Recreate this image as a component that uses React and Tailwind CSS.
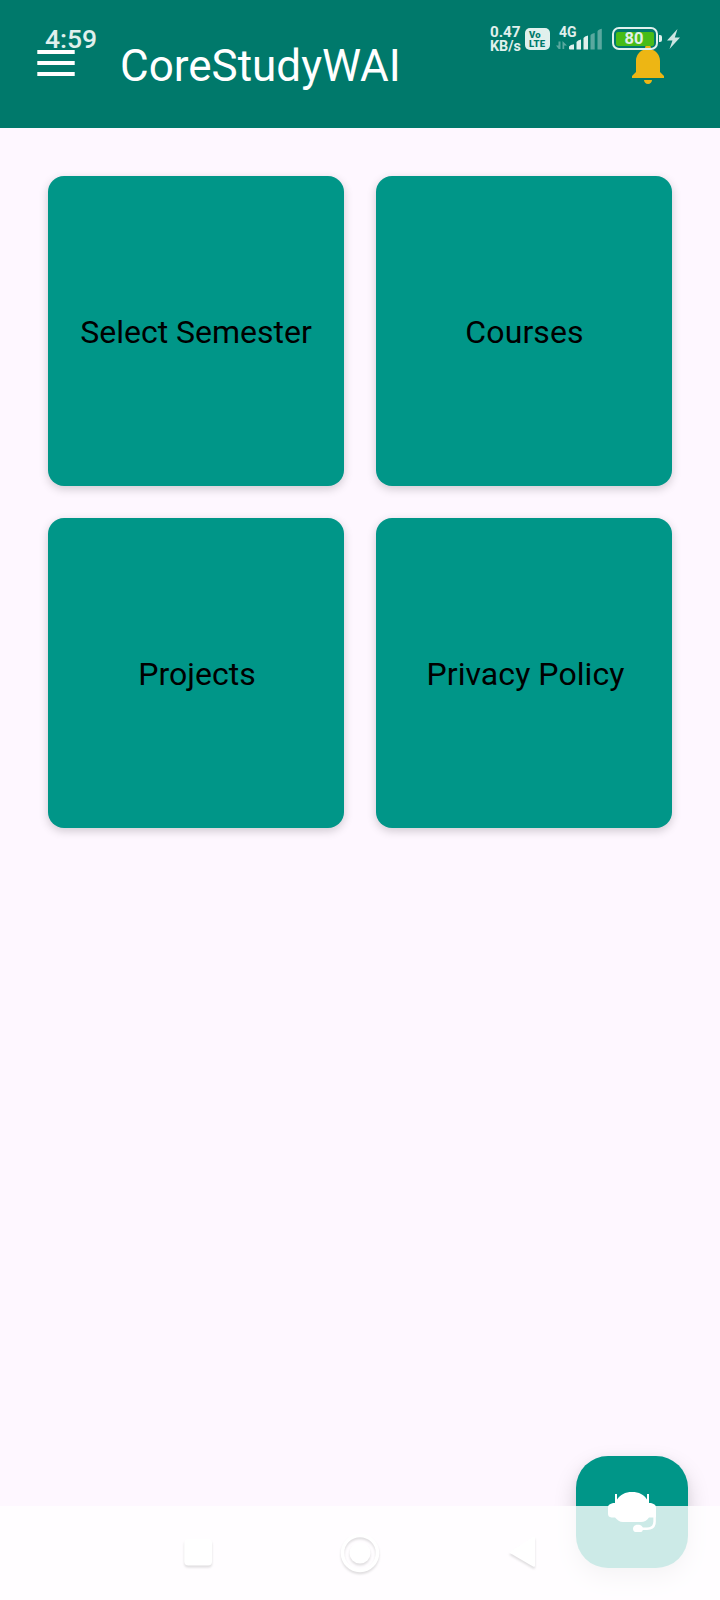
import React from "react";

const tiles = [
  { label: "Select Semester", offset: "pt-[2px]" },
  { label: "Courses", offset: "pt-[2px] pl-[1px] tracking-[0.1px]" },
  { label: "Projects", offset: "pt-[1px] pl-[2px]" },
  { label: "Privacy Policy", offset: "pt-[1px] pl-[3px] tracking-[0.07px]" },
];

function MenuIcon() {
  return (
    <svg className="h-[26px] w-[38px]" viewBox="0 0 38 26" fill="#fff">
      <rect x="0.300" y="0" width="37.400" height="4" />
      <rect x="0.300" y="11" width="37.400" height="4" />
      <rect x="0.300" y="22" width="37.400" height="4" />
    </svg>
  );
}

function BellIcon() {
  return (
    <svg className="h-[39px] w-8" viewBox="0 0 32 39" fill="#edb614">
      <path d="M0 33V31L4 27V16C4 10.300 7.800 5.600 13 4.300V3C13 1.200 14.300 0 16 0s3 1.200 3 3v1.300C24.200 5.600 28 10.300 28 16V27l4 4v2Z" />
      <path d="M12 35h8c0 2.300-1.700 4-4 4s-4-1.700-4-4Z" />
    </svg>
  );
}

function SignalIcon() {
  return (
    <svg className="absolute inset-0 h-full w-full" viewBox="0 0 47 24" fill="#e0f0ed">
      <g opacity="0.4">
        <path d="M2.500 15.500h2V23H2.700L0 19.500h2.500ZM6.500 15l4.500 4.500H8.200V23H6.500Z" />
        <path d="M34.500 9.500q0-1.500 4.200-2.500v16.500h-4.200ZM41.500 5.500q0-1.700 4.300-2.700v20.700h-4.300Z" />
      </g>
      <path d="M13 20.500q1.500-2 5-2.300v5.300h-4q-1 0-1-1ZM20.500 16q1-1.800 4.500-2.500v10h-4.500ZM27.500 12q1-1.700 4.500-2.500v14h-4.500Z" />
    </svg>
  );
}

function StatusBar() {
  return (
    <div className="absolute inset-x-0 top-0 z-20 flex h-[78px] items-start pr-[40px] pl-[45px] text-[#e0f0ed]">
      <span className="mt-[23px] text-[26.5px] leading-[32px] font-medium">4:59</span>
      <div className="mt-[26px] ml-auto flex h-6 items-start">
        <div className="mr-[5px] w-[30px] text-[15.2px] leading-[14px] font-bold whitespace-nowrap">
          <div className="-mt-px h-[14px]">0.47</div>
          <div className="text-[14.3px]">KB/s</div>
        </div>
        <div className="mt-[2px] mr-[6px] flex h-[22px] w-[25px] flex-col justify-center rounded-[5px] bg-[#e0f0ed] pl-[4px] text-[9.5px] leading-[9px] font-black tracking-[0.3px] text-[#00796b]">
          <span>Vo</span>
          <span>LTE</span>
        </div>
        <div className="relative mr-[9px] h-6 w-[47px]">
          <SignalIcon />
          <span className="absolute top-0 left-[3px] text-[14px] leading-[13px] font-bold">4G</span>
        </div>
        <div className="mt-[1px] flex h-[23px] w-[46px] items-center justify-center rounded-[7px] border-2 border-[#e0f0ed]">
          <div className="flex h-[14px] w-[38px] items-center justify-center rounded-[2px] bg-[#47bc17] pr-[2px] text-[16.5px] leading-[14px] font-bold">
            <span className="mt-px">80</span>
          </div>
        </div>
        <span className="mt-[9px] ml-[1px] h-[7px] w-[3px] rounded-r-[2px] bg-[#e0f0ed]" />
        <svg className="mt-[3px] ml-[5px] h-5 w-[13px]" viewBox="0 0 13 20" fill="#cde5e2">
          <path d="M10.500 0 0 11.500h5.500L2.500 20 13 8.500H7.800Z" />
        </svg>
      </div>
    </div>
  );
}

function Header() {
  return (
    <header className="flex h-32 items-start bg-[#00796b] pr-14 pl-[37px]">
      <button className="mt-[50px]" aria-label="Menu">
        <MenuIcon />
      </button>
      <h1 className="mt-[40px] ml-[45px] text-[44px] leading-[52px] font-normal text-white">CoreStudyWAI</h1>
      <button className="mt-[45px] ml-auto" aria-label="Notifications">
        <BellIcon />
      </button>
    </header>
  );
}

function SupportButton() {
  return (
    <button
      aria-label="Support"
      className="absolute right-8 bottom-8 size-28 rounded-[32px] bg-[#009688] shadow-[0_10px_22px_rgba(0,0,0,0.17),0_1px_8px_rgba(0,0,0,0.04)]"
    >
      <svg className="size-28" viewBox="0 0 112 112" fill="#fff">
        <path d="M39 38h2v5.500C44.500 38.500 49 36 56 36s12 2.500 15 7.500V38h2v9c4 0 7 1.500 7 4.500V60q0 1.500-1.500 1.500H73C71 64.500 68 66 65 66H47c-3.500 0-5.500-2-8-4.500h-3.500Q32 61 32 58v-6.500c0-3 3-4.500 7-4.500Z" />
        <path d="M78.600 60v5.500c0 5-2.600 7.200-7.600 7.200h-7" fill="none" stroke="#fff" strokeWidth="2.500" />
        <path d="M57 72.500c0-2.500 2-3.800 5-3.800 2.500 0 5 1.500 5 4 0 2-1 3.200-2 3.200h-5.500c-1.500 0-2.500-1.200-2.500-3.400Z" />
      </svg>
    </button>
  );
}

function NavigationBar() {
  return (
    <nav className="absolute inset-x-0 bottom-0 z-10 flex h-[94px] items-start bg-white/80 pl-[180px]">
      <svg className="mt-[26px] h-[48px] w-[364px]" viewBox="0 0 364 48" fill="#fff">
        <g className="drop-shadow-[0_2px_1px_rgba(0,0,0,0.13)]">
          <rect x="4.300" y="7" width="27.700" height="26.500" rx="4" />
          <circle cx="180" cy="21" r="17.500" fill="none" stroke="#fff" strokeWidth="3.500" />
          <circle cx="180" cy="21" r="10.500" />
          <path d="M355 6v27.500q0 2-2 1L329 20.500 353 5q2-1 2 1Z" />
        </g>
      </svg>
    </nav>
  );
}

export default function App() {
  return (
    <div className="relative h-[1600px] w-[720px] overflow-hidden bg-[#fef7ff] font-['Roboto',sans-serif]">
      <StatusBar />
      <Header />
      <main className="grid grid-cols-2 gap-8 p-12">
        {tiles.map(({ label, offset }) => (
          <button
            key={label}
            className={`flex h-[310px] items-center justify-center rounded-2xl bg-[#009688] text-[32px] leading-[38px] text-black shadow-[0_3px_10px_rgba(0,0,0,0.19)] ${offset}`}
          >
            {label}
          </button>
        ))}
      </main>
      <SupportButton />
      <NavigationBar />
    </div>
  );
}
